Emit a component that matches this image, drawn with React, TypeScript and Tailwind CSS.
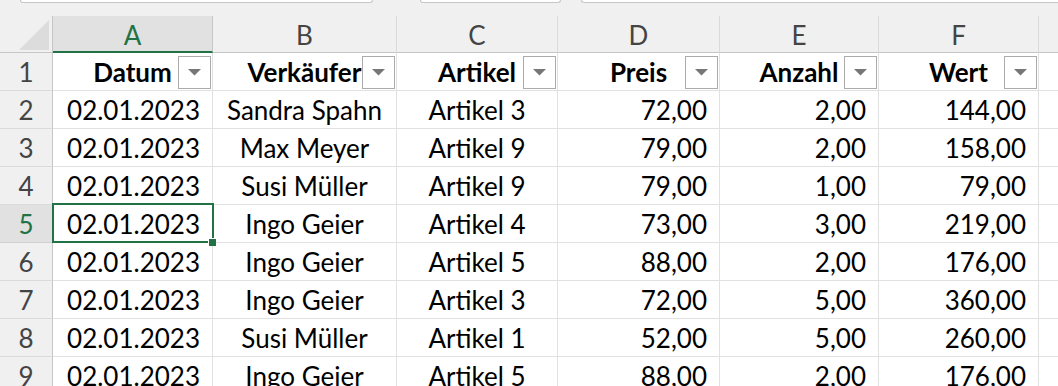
import React from "react";

const columns = [
  { key: "A", width: 160, title: "Datum", align: "right" as const },
  { key: "B", width: 184, title: "Verkäufer", align: "center" as const },
  { key: "C", width: 161, title: "Artikel", align: "center" as const },
  { key: "D", width: 162, title: "Preis", align: "right" as const },
  { key: "E", width: 159, title: "Anzahl", align: "right" as const },
  { key: "F", width: 160, title: "Wert", align: "right" as const },
];

const rows: string[][] = [
  ["02.01.2023", "Sandra Spahn", "Artikel 3", "72,00", "2,00", "144,00"],
  ["02.01.2023", "Max Meyer", "Artikel 9", "79,00", "2,00", "158,00"],
  ["02.01.2023", "Susi Müller", "Artikel 9", "79,00", "1,00", "79,00"],
  ["02.01.2023", "Ingo Geier", "Artikel 4", "73,00", "3,00", "219,00"],
  ["02.01.2023", "Ingo Geier", "Artikel 5", "88,00", "2,00", "176,00"],
  ["02.01.2023", "Ingo Geier", "Artikel 3", "72,00", "5,00", "360,00"],
  ["02.01.2023", "Susi Müller", "Artikel 1", "52,00", "5,00", "260,00"],
  ["02.01.2023", "Ingo Geier", "Artikel 5", "88,00", "2,00", "176,00"],
];

const activeRow = 5;
const activeCol = "A";

function FilterButton() {
  return (
    <div className="absolute right-[1px] top-[3px] flex h-[33px] w-[33px] items-center justify-center border border-[#ababab] bg-white">
      <svg width="13" height="7" viewBox="0 0 13 7">
        <polygon points="0,0 13,0 6.5,6.5" fill="#777777" />
      </svg>
    </div>
  );
}

function TopBar() {
  return (
    <div className="flex h-[16px] items-start bg-[#f0f0f0]">
      <div className="ml-[20px] h-[3px] w-[353px] rounded-b-[4px] border-x border-b border-[#c6c6c6] bg-white" />
      <div className="ml-[47px] h-[3px] w-[141px] rounded-b-[4px] border-x border-b border-[#c6c6c6] bg-white" />
      <div className="ml-[20px] h-[3px] flex-1 rounded-bl-[4px] border-b border-l border-[#c6c6c6] bg-white" />
    </div>
  );
}

function ColumnHeaders() {
  return (
    <div className="flex h-[37px] bg-[#f0f0f0]">
      <div className="flex h-full w-[53px] shrink-0 items-end justify-end border-b border-r border-[#c6c6c6] pb-[2px] pr-[3px]">
        <svg width="30" height="30" viewBox="0 0 30 30">
          <polygon points="0,30 30,0 30,30" fill="#dcdcdc" />
        </svg>
      </div>
      {columns.map((c) => {
        const active = c.key === activeCol;
        return (
          <div
            key={c.key}
            style={{ width: c.width }}
            className={
              active
                ? "flex h-full shrink-0 items-center justify-center border-b-2 border-r border-b-[#217346] border-r-[#c6c6c6] bg-[#e1e1e1] pt-[2px] text-[26px] text-[#217346]"
                : "flex h-full shrink-0 items-center justify-center border-b border-r border-b-[#c6c6c6] border-r-[#dadada] pt-[1px] text-[26px] text-[#444444]"
            }
          >
            {c.key}
          </div>
        );
      })}
      <div className="h-full flex-1 border-b border-[#c6c6c6]" />
    </div>
  );
}

function RowHeader({ n }: { n: number }) {
  const active = n === activeRow;
  return (
    <div
      className={
        active
          ? "flex h-full w-[53px] shrink-0 items-center justify-center border-b border-r border-b-[#d0d0d0] border-r-[#c6c6c6] bg-[#e1e1e1] text-[26px] text-[#217346]"
          : "flex h-full w-[53px] shrink-0 items-center justify-center border-b border-r border-b-[#dadada] border-r-[#c6c6c6] bg-[#f0f0f0] text-[26px] text-[#444444]"
      }
    >
      {n}
    </div>
  );
}

function HeaderRow() {
  return (
    <div className="flex h-[38px]">
      <RowHeader n={1} />
      {columns.map((c) => (
        <div
          key={c.key}
          style={{ width: c.width }}
          className="relative flex h-full shrink-0 items-center justify-center border-b border-r border-[#e1e1e1] text-[26px] font-bold text-black"
        >
          <span className="pt-[1px]">{c.title}</span>
          <FilterButton />
        </div>
      ))}
      <div className="h-full flex-1 border-b border-[#e1e1e1]" />
    </div>
  );
}

function DataRow({ n, values }: { n: number; values: string[] }) {
  return (
    <div className="flex h-[38px]">
      <RowHeader n={n} />
      {columns.map((c, i) => {
        const selected = n === activeRow && c.key === activeCol;
        return (
          <div
            key={c.key}
            style={{ width: c.width }}
            className={
              c.align === "right"
                ? "relative flex h-full shrink-0 items-center justify-end border-b border-r border-[#e1e1e1] pr-[12px] text-[26px] text-black"
                : "relative flex h-full shrink-0 items-center justify-center border-b border-r border-[#e1e1e1] text-[26px] text-black"
            }
          >
            <span className="pt-[1px]">{values[i]}</span>
            {selected && (
              <>
                <div className="absolute -left-[1px] -top-[2px] bottom-[-1px] right-[-2px] z-10 border-2 border-[#217346]" />
                <div className="absolute bottom-[-4px] right-[-4px] z-20 h-[8px] w-[8px] border-l border-t border-white bg-[#217346]" />
              </>
            )}
          </div>
        );
      })}
      <div className="h-full flex-1 border-b border-[#e1e1e1]" />
    </div>
  );
}

export default function App() {
  return (
    <div
      className="h-[386px] w-[1058px] overflow-hidden bg-white leading-none"
      style={{ fontFamily: "Lato, 'Open Sans', sans-serif" }}
    >
      <TopBar />
      <ColumnHeaders />
      <HeaderRow />
      {rows.map((r, i) => (
        <DataRow key={i} n={i + 2} values={r} />
      ))}
    </div>
  );
}
